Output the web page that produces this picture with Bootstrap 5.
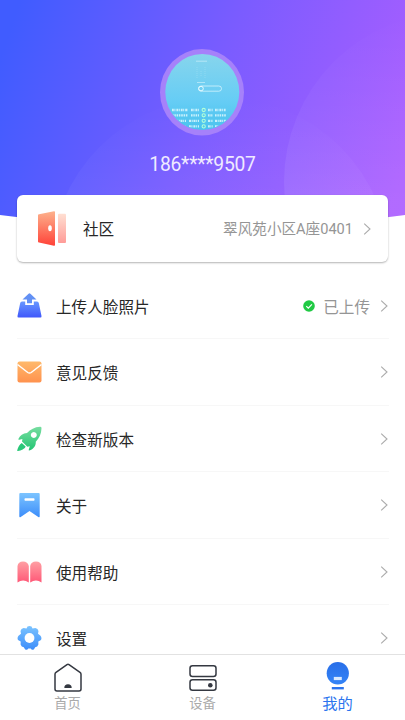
<!DOCTYPE html>
<html lang="zh-CN">
<head>
<meta charset="utf-8">
<meta name="viewport" content="width=device-width, initial-scale=1">
<title>我的</title>
<link href="https://cdn.jsdelivr.net/npm/bootstrap@5.3.0/dist/css/bootstrap.min.css" rel="stylesheet">
<style>
body{font-family:"Noto Sans CJK SC",sans-serif;color:#272727;background:#fff;font-size:15.6px;line-height:1.5}
.screen{height:720px}
.hero{height:195px;padding-top:49px}
.hero-bg{position:absolute;left:0;top:0;z-index:0}
.avatar{width:84px;height:87px;margin-right:2px}
.phone{font-family:Roboto,"Noto Sans CJK SC",sans-serif;font-size:19.3px;line-height:28px;margin-top:15px;letter-spacing:-.25px;color:#efeaff;font-weight:400}
.community{height:67px;margin:0 17px;border-radius:6px;box-shadow:0 1px 2px rgba(0,0,0,.3);padding:0 17px 0 20px;z-index:1}
.community .title{margin-left:16px}
.addr{font-family:Roboto,"Noto Sans CJK SC",sans-serif;font-size:14.6px;color:#959595;font-weight:400;margin-right:10px;padding-top:2px}
.menu{padding:10.7px 16px 0 17px}
.menu .entry{height:66.5px;flex:none;border-bottom:1px solid #f7f7f7;padding:1px 1px 0 0}
.entry .title{margin-left:14px;padding-top:1px}
.status{color:#959595;padding-top:1px;margin-right:10px}
.tabs{height:66px;border-top:1.5px solid #e2e2e2;font-size:13.3px;line-height:20px;color:#aaa}
.tabs .col{padding-top:8px}
.tabs .on{color:#2b74ee;font-size:15.3px;padding-top:7px}
svg{display:block;flex:none}
</style>
<script src="https://cdn.jsdelivr.net/npm/bootstrap@5.3.0/dist/js/bootstrap.bundle.min.js"></script>
</head>
<body>
<svg width="0" height="0" class="position-absolute"><defs>
<symbol id="chev" viewBox="0 0 8 14"><path d="M1.2 1.6 7 7 1.2 12.4" fill="none" stroke="#ababab" stroke-width="1.1"/></symbol>
<linearGradient id="gb" x2="0" y2="1"><stop stop-color="#7cc4ff"/><stop offset="1" stop-color="#3c8dfa"/></linearGradient>
</defs></svg>
<div class="screen d-flex flex-column overflow-hidden position-relative">
  <svg class="hero-bg" width="405" height="240" viewBox="0 0 405 240">
    <defs>
      <linearGradient id="bg" gradientUnits="userSpaceOnUse" x1="10" y1="30" x2="405" y2="170"><stop stop-color="#405cff"/><stop offset=".5" stop-color="#7a5cff"/><stop offset="1" stop-color="#ab5eff"/></linearGradient>
      <linearGradient id="halo" x2="0" y2="1"><stop stop-color="#fff" stop-opacity="0"/><stop offset=".4" stop-color="#fff" stop-opacity=".06"/></linearGradient>
      <linearGradient id="halo2" x2="0" y2="1"><stop stop-color="#fff" stop-opacity="0"/><stop offset=".55" stop-color="#fff" stop-opacity=".08"/></linearGradient>
      <clipPath id="hc"><path d="M0 0H405V215Q202 243 0 215Z"/></clipPath>
    </defs>
    <g clip-path="url(#hc)"><rect width="405" height="240" fill="url(#bg)"/>
    <circle cx="220" cy="267" r="170" fill="url(#halo)"/>
    <circle cx="454" cy="182" r="170" fill="url(#halo2)"/></g>
  </svg>
  <header class="hero d-flex flex-column align-items-center position-relative flex-shrink-0">
    <svg class="avatar" viewBox="0 0 84 87">
      <defs><linearGradient id="av" x2="0" y2="1"><stop stop-color="#87d5ec"/><stop offset=".6" stop-color="#67cdf5"/><stop offset="1" stop-color="#4bc3ee"/></linearGradient>
      <clipPath id="ac"><ellipse cx="42.3" cy="43" rx="36.5" ry="37.6"/></clipPath></defs>
      <ellipse cx="42" cy="43.3" rx="42" ry="43.2" fill="#a681fa"/>
      <ellipse cx="42.3" cy="43" rx="37" ry="38.1" fill="url(#av)"/>
      <g clip-path="url(#ac)" fill="none" stroke="#e6fbff">
        <path d="M36 12.2H47M37 33.5H45" stroke-width=".8" opacity=".65"/><path d="M37 18v12M41 22v5M45 18v12" stroke-dasharray="1 1" stroke-width=".5" opacity=".4"/>
        <rect x="38.5" y="37" width="23" height="5.2" rx="2.6" stroke-width=".8" opacity=".85"/><circle cx="41" cy="39.6" r="2.3" stroke-width="1"/>
        <g stroke-width="2.3" opacity=".8"><path d="M12 61H28M31 61H39M48 61H53M55 61H66" stroke-dasharray="1.8 .6 1 1"/><path d="M12 66.3H28M31 66.3H39M48 66.3H53M55 66.3H66" stroke-dasharray="1.6 .8 1.4 .8"/><path d="M16 71.8H26M29 71.8H39M48 71.8H53M55 71.8H66" stroke-dasharray="2 .7 1 .8"/><path d="M16 77.4H26M29 77.4H39M48 77.4H53M55 77.4H66" stroke-dasharray="1.8 .6 1 1"/></g>
        <g stroke="#b2ffd8" stroke-width="1.1"><circle cx="43.7" cy="61" r="1.6"/><circle cx="43.7" cy="66.3" r="1.6"/><circle cx="43.7" cy="71.8" r="1.6"/><circle cx="43.7" cy="77.4" r="1.6"/></g>
      </g>
    </svg>
    <div class="phone">186****9507</div>
  </header>

  <a class="community bg-white d-flex align-items-center position-relative flex-shrink-0 text-reset text-decoration-none" href="#">
    <svg width="30" height="37" viewBox="0 0 30 37">
      <defs><linearGradient id="dr" x2="0" y2="1"><stop stop-color="#fdb28d"/><stop offset="1" stop-color="#ff4238"/></linearGradient><linearGradient id="dl" x2="0" y2="1"><stop stop-color="#ffdfd2"/><stop offset="1" stop-color="#ff9c98"/></linearGradient></defs>
      <path d="M2 4.3 17 1.2Q18 1 18 2V35Q18 36 17 35.8L2 32.5Q1 32.3 1 31.5V5.3Q1 4.5 2 4.3Z" fill="url(#dr)"/><ellipse cx="13" cy="18.2" rx="1.8" ry="3" fill="#fff"/>
      <rect x="21" y="3.8" width="8" height="29.2" rx="1" fill="url(#dl)"/>
    </svg>
    <span class="title">社区</span>
    <span class="addr ms-auto">翠风苑小区A座0401</span>
    <svg width="8" height="14"><use href="#chev"/></svg>
  </a>

  <main class="menu d-flex flex-column flex-grow-1 overflow-hidden">
    <div class="entry d-flex align-items-center">
      <svg width="25" height="25" viewBox="0 0 25 25"><defs><linearGradient id="u1" x2="0" y2="1"><stop stop-color="#6797ff"/><stop offset="1" stop-color="#4058fb"/></linearGradient></defs>
      <path d="M5 8.5H8.2V12H16.8V8.5H20Q21.5 8.5 21.8 10L24.5 23Q24.8 24.5 23.4 24.5H1.6Q.2 24.5.5 23L3.2 10Q3.5 8.5 5 8.5Z" fill="url(#u1)"/><path d="M11.6.7Q12.5 0 13.4.7L19.5 6.4H15V10.3H10V6.4H5.5Z" fill="#6290f4"/></svg>
      <span class="title">上传人脸照片</span>
      <svg class="ms-auto" width="12" height="12" viewBox="0 0 12 12"><circle cx="6" cy="6" r="5.8" fill="#20c944"/><path d="m3.3 6.1 2 2 3.6-3.8" fill="none" stroke="#fff" stroke-width="1.2"/></svg>
      <span class="status ms-2">已上传</span>
      <svg width="8" height="14"><use href="#chev"/></svg>
    </div>
    <div class="entry d-flex align-items-center">
      <svg width="25" height="22" viewBox="0 0 25 22"><defs><linearGradient id="ml" x2="0" y2="1"><stop stop-color="#ffb96b"/><stop offset="1" stop-color="#ff924e"/></linearGradient></defs><rect x=".5" y=".5" width="24" height="21" rx="2" fill="url(#ml)"/><path d="M.5 3.5 10.8 11.5Q12.5 12.7 14.2 11.5L24.5 3.5" fill="none" stroke="#fff" stroke-width="1.5"/></svg>
      <span class="title">意见反馈</span><svg class="ms-auto" width="8" height="14"><use href="#chev"/></svg>
    </div>
    <div class="entry d-flex align-items-center">
      <svg width="25" height="26" viewBox="0 0 25 26"><defs><linearGradient id="rk" x2="0" y2="1"><stop stop-color="#77dda0"/><stop offset="1" stop-color="#24c573"/></linearGradient></defs><path fill-rule="evenodd" d="M23 .8Q24.8.5 24.5 2.6C24.2 8 22.5 12 18.8 15.8 19 20 16.5 23 13 24.3 12 24.7 11.4 24.2 11.9 23.2L12.8 20.3 10.4 20.7 5 15.5 5.4 13 2.2 13.8Q1 14 1.5 12.8C3 9.5 6 7.2 10 7.1 13.5 3.3 17.5 1.2 23 .8ZM16.8 6a3 3 0 1 0 .01 0Z" fill="url(#rk)"/><path d="M4.8 17 8.6 20.5C7.8 23 4.2 24.4 1 25 .2 25 .1 24.6.3 24 1 21.5 2.5 18.2 4.8 17Z" fill="#29c778"/></svg>
      <span class="title">检查新版本</span><svg class="ms-auto" width="8" height="14"><use href="#chev"/></svg>
    </div>
    <div class="entry d-flex align-items-center">
      <svg width="25" height="26" viewBox="0 0 25 26"><path d="M3.3 1H21.7Q22.7 1 22.7 2V24.2Q22.7 25.8 21.3 24.9L12.5 19 3.7 24.9Q2.3 25.8 2.3 24.2V2Q2.3 1 3.3 1Z" fill="url(#gb)"/><rect x="7.5" y="6.3" width="10" height="2.5" rx=".7" fill="#fff"/></svg>
      <span class="title">关于</span><svg class="ms-auto" width="8" height="14"><use href="#chev"/></svg>
    </div>
    <div class="entry d-flex align-items-center">
      <svg width="25" height="22" viewBox="0 0 25 22"><defs><linearGradient id="bk" x2="0" y2="1"><stop stop-color="#ffa0a4"/><stop offset="1" stop-color="#ff5877"/></linearGradient></defs><path d="M.5 5Q1.2.5 6 .5T11.8 5V21.5Q6 17.6.5 21.5ZM13.2 5Q14 .5 19 .5T24.5 5V21.5Q19 17.6 13.2 21.5Z" fill="url(#bk)"/></svg>
      <span class="title">使用帮助</span><svg class="ms-auto" width="8" height="14"><use href="#chev"/></svg>
    </div>
    <div class="entry d-flex align-items-center">
      <svg width="25" height="26" viewBox="0 0 25 26"><path d="M10.5 1.5Q12.5.3 14.5 1.5L15.5 3.5 18.4 3.1Q21 3.6 21.5 6.1L21 8.7 23.5 10.8Q25.1 12.9 24 15L21.3 16.6 21.4 19.4Q20.6 21.8 18.2 22.2L17 24.2Q14.9 25.6 13.7 23.4H11.3Q10.1 25.6 8 24.2L6.8 22.2Q4.4 21.8 3.6 19.4L3.7 16.6 1 15Q-.1 12.9 1.5 10.8L4 8.7 3.5 6.1Q4 3.6 6.6 3.1L9.5 3.5Z" fill="url(#gb)"/><circle cx="12.5" cy="13" r="4.9" fill="#fff"/></svg>
      <span class="title">设置</span><svg class="ms-auto" width="8" height="14"><use href="#chev"/></svg>
    </div>
  </main>

  <nav class="tabs row g-0 bg-white flex-shrink-0 text-center position-relative">
    <div class="col d-flex flex-column align-items-center">
      <svg width="28" height="30" viewBox="0 0 28 30"><path d="M13 1.7Q14 1 15 1.7L26 9.3Q27 10 27 11.3V26Q27 28 25 28H3Q1 28 1 26V11.3Q1 10 2 9.3Z" fill="none" stroke="#343841" stroke-width="1.5"/><path d="M10.3 25A3.7 3.7 0 0 1 17.7 25Z" fill="#343841"/></svg>
      <span>首页</span>
    </div>
    <div class="col d-flex flex-column align-items-center">
      <svg width="28" height="30" viewBox="0 0 28 30"><g fill="none" stroke="#343841" stroke-width="1.5"><rect x="1" y="2.8" width="26" height="10.6" rx="2.5"/><rect x="1" y="16.7" width="26" height="10.6" rx="2.5"/></g><circle cx="21.3" cy="22.2" r="2.3" fill="#343841"/></svg>
      <span>设备</span>
    </div>
    <div class="col on d-flex flex-column align-items-center">
      <svg width="28" height="30" viewBox="0 0 28 30"><defs><linearGradient id="me" x2="0" y2="1"><stop stop-color="#286ee8"/><stop offset="1" stop-color="#3484f7"/></linearGradient></defs><ellipse cx="13.8" cy="11.3" rx="11.1" ry="11.3" fill="url(#me)"/><rect x="9.8" y="14.9" width="8" height="3.2" fill="#d9e9ff"/><rect x="7.8" y="25" width="12" height="2.4" fill="#2b74ee"/></svg>
      <span>我的</span>
    </div>
  </nav>
</div>
</body>
</html>
